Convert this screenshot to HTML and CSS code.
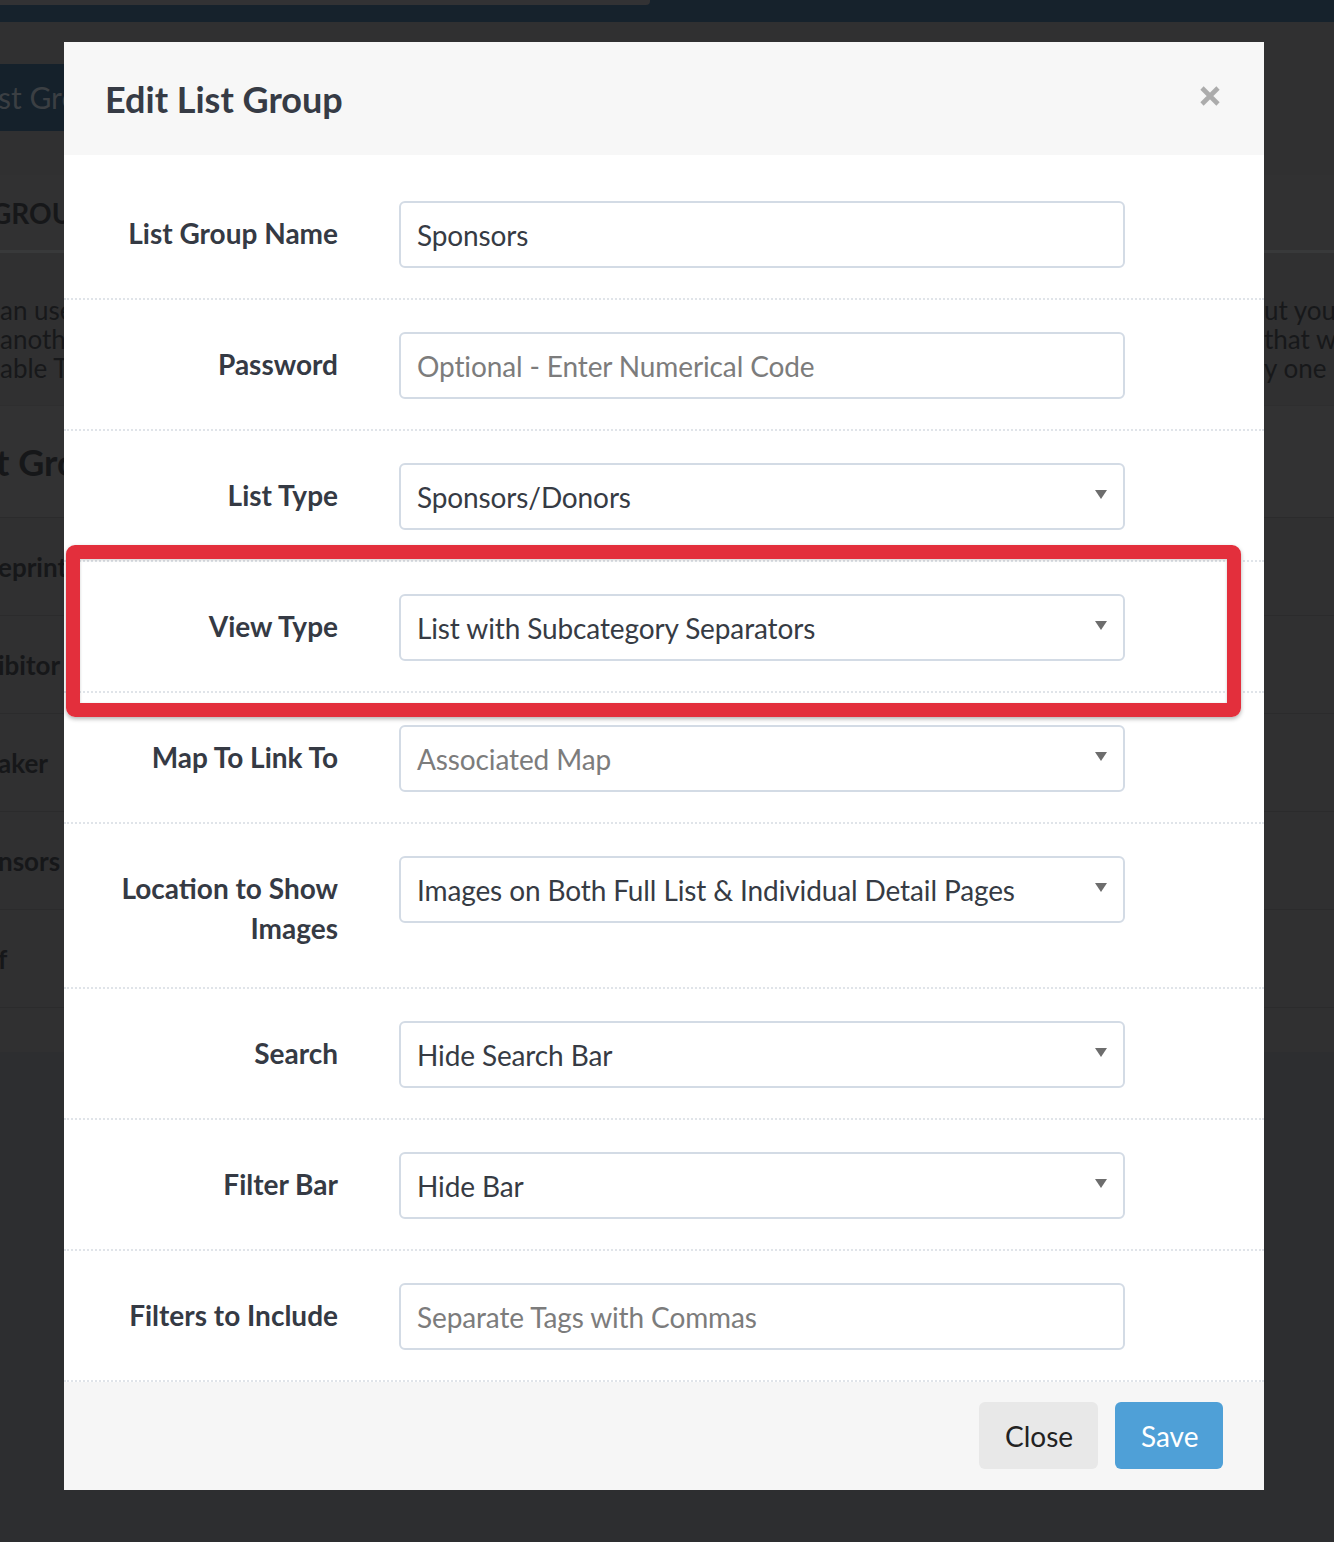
FILE: index.html
```html
<!DOCTYPE html>
<html lang="en">
<head>
<meta charset="utf-8">
<title>Edit List Group</title>
<link rel="stylesheet" href="styles.css">
</head>
<body>
<div class="page">
  <div class="topbar"><div class="topbar-hl"></div></div>
  <div class="content">
    <div class="tab-row"><div class="tab">st Group</div></div>
    <div class="panel-head">GROUPS</div>
    <div class="intro">
      <div class="intro-col"><p>an use</p><p>anoth</p><p>able T</p></div>
      <div class="intro-col intro-right"><p>ut you</p><p>that wi</p><p>y one</p></div>
    </div>
    <div class="section-head">t Groups</div>
    <div class="bg-row">eprint</div>
    <div class="bg-row">ibitor</div>
    <div class="bg-row">aker</div>
    <div class="bg-row">nsors</div>
    <div class="bg-row">f</div>
    <div class="bg-rest"></div>
  </div>
</div>

<div class="modal">
  <div class="modal-header">
    <h2 class="modal-title">Edit List Group</h2>
    <button class="close" type="button" aria-label="Close">
      <svg width="22" height="22" viewBox="0 0 22 22"><path d="M3 3 L19 19 M19 3 L3 19" stroke="#acacac" stroke-width="4.6" stroke-linecap="butt" fill="none"/></svg>
    </button>
  </div>
  <div class="modal-body">
    <div class="form-row">
      <label class="form-label">List Group Name</label>
      <input class="field" type="text" value="Sponsors">
    </div>
    <div class="form-row">
      <label class="form-label">Password</label>
      <input class="field" type="text" placeholder="Optional - Enter Numerical Code">
    </div>
    <div class="form-row">
      <label class="form-label">List Type</label>
      <div class="field select"><span>Sponsors/Donors</span><svg class="caret" width="12" height="9" viewBox="0 0 12 9"><polygon points="0,0 12,0 6,9"/></svg></div>
    </div>
    <div class="form-row">
      <label class="form-label">View Type</label>
      <div class="field select"><span>List with Subcategory Separators</span><svg class="caret" width="12" height="9" viewBox="0 0 12 9"><polygon points="0,0 12,0 6,9"/></svg></div>
    </div>
    <div class="form-row">
      <label class="form-label">Map To Link To</label>
      <div class="field select placeholder"><span>Associated Map</span><svg class="caret" width="12" height="9" viewBox="0 0 12 9"><polygon points="0,0 12,0 6,9"/></svg></div>
    </div>
    <div class="form-row">
      <label class="form-label two-line">Location to Show Images</label>
      <div class="field select"><span>Images on Both Full List &amp; Individual Detail Pages</span><svg class="caret" width="12" height="9" viewBox="0 0 12 9"><polygon points="0,0 12,0 6,9"/></svg></div>
    </div>
    <div class="form-row">
      <label class="form-label">Search</label>
      <div class="field select"><span>Hide Search Bar</span><svg class="caret" width="12" height="9" viewBox="0 0 12 9"><polygon points="0,0 12,0 6,9"/></svg></div>
    </div>
    <div class="form-row">
      <label class="form-label">Filter Bar</label>
      <div class="field select"><span>Hide Bar</span><svg class="caret" width="12" height="9" viewBox="0 0 12 9"><polygon points="0,0 12,0 6,9"/></svg></div>
    </div>
    <div class="form-row">
      <label class="form-label">Filters to Include</label>
      <input class="field" type="text" placeholder="Separate Tags with Commas">
    </div>
  </div>
  <div class="modal-footer">
    <button class="btn btn-default" type="button">Close</button>
    <button class="btn btn-primary" type="button">Save</button>
  </div>
</div>

<div class="highlight"></div>
</body>
</html>
```

FILE: styles.css
```css
html, body {
  margin: 0;
  padding: 0;
}
body {
  font-family: Lato, "Noto Sans", "Liberation Sans", sans-serif;
  background: #2d2e30;
  width: 1334px;
  height: 1542px;
  overflow: hidden;
  position: relative;
}

/* ---------- background page (dimmed) ---------- */
.page {
  width: 1334px;
  height: 1542px;
  background: #2d2e30;
}
.topbar {
  height: 22px;
  background: #16222c;
}
.topbar-hl {
  width: 650px;
  height: 5px;
  background: #323234;
  border-bottom-right-radius: 4px;
}
.content {
  height: 1030px;
  background: #303031;
  overflow: hidden;
  color: #161719;
}
.tab-row {
  padding-top: 42px;
  height: 67px;
}
.tab {
  width: 220px;
  height: 67px;
  line-height: 67px;
  background: #15212b;
  color: #3b3f43;
  font-size: 30px;
  margin-left: -2px;
  white-space: nowrap;
}
.panel-head {
  margin-top: 44px;
  height: 75px;
  line-height: 76px;
  background: #313132;
  border-bottom: 3px solid #38393a;
  font-weight: 700;
  font-size: 28px;
  color: #161719;
  margin-left: -9px;
  white-space: nowrap;
}
.intro {
  height: 109px;
  padding-top: 43px;
  display: flex;
  justify-content: space-between;
  border-bottom: 1px solid #2e2e2f;
}
.intro-col p {
  margin: 0;
  font-size: 26px;
  line-height: 29px;
  color: #17181a;
  white-space: nowrap;
}
.intro-right {
  width: 70px;
  overflow: hidden;
  padding-left: 2px;
}
.section-head {
  height: 111px;
  line-height: 112px;
  background: #323233;
  font-weight: 700;
  font-size: 36px;
  color: #161719;
  margin-left: -4px;
  white-space: nowrap;
}
.bg-row {
  height: 97px;
  line-height: 98px;
  border-top: 1px solid #2b2b2c;
  font-weight: 700;
  font-size: 26px;
  color: #161719;
  white-space: nowrap;
  margin-left: -2px;
}
.bg-rest {
  border-top: 1px solid #2b2b2c;
}

/* ---------- modal ---------- */
.modal {
  position: absolute;
  left: 64px;
  top: 42px;
  width: 1200px;
  background: #ffffff;
}
.modal-header {
  height: 113px;
  box-sizing: border-box;
  padding: 36px 43px 0 41px;
  background: #f7f7f7;
  display: flex;
  justify-content: space-between;
  align-items: flex-start;
}
.modal-title {
  margin: 0;
  font-size: 36px;
  line-height: 43px;
  font-weight: 700;
  color: #363b45;
}
.close {
  margin-top: 7px;
  padding: 0;
  border: 0;
  background: none;
  width: 22px;
  height: 22px;
  display: block;
}
.close svg {
  display: block;
}
.modal-body {
  padding-top: 14px;
}
.form-row {
  display: grid;
  grid-template-columns: 274px 726px;
  column-gap: 61px;
  align-items: start;
  padding: 32px 0 30px;
  border-bottom: 2px dotted #e0e4e9;
}
.form-label {
  text-align: right;
  font-size: 28px;
  font-weight: 700;
  line-height: 40px;
  padding-top: 12px;
  color: #353a44;
}
.form-label.two-line {
  padding-bottom: 9px;
}
.field {
  box-sizing: border-box;
  height: 67px;
  width: 726px;
  border: 2px solid #d3dbe5;
  border-radius: 6px;
  padding: 0 16px;
  font-family: Lato, "Noto Sans", "Liberation Sans", sans-serif;
  font-size: 28px;
  letter-spacing: -0.12px;
  color: #363b44;
  background: #fff;
  outline: none;
  margin: 0;
}
.field::placeholder {
  color: #7c7c7c;
  opacity: 1;
}
.select {
  display: flex;
  align-items: center;
  justify-content: space-between;
  white-space: nowrap;
}
.select.placeholder {
  color: #7c7c7c;
}
.caret {
  fill: #6d6d6d;
  margin-top: -4px;
  flex: none;
}
.modal-footer {
  background: #f6f6f6;
  padding: 20px 41px 21px;
  display: flex;
  justify-content: flex-end;
  gap: 17px;
}
.btn {
  height: 67px;
  border: 0;
  border-radius: 6px;
  padding: 0 26px;
  font-family: Lato, "Noto Sans", "Liberation Sans", sans-serif;
  font-size: 28px;
  cursor: pointer;
}
.btn-default {
  background: #e8e8e8;
  color: #222222;
  width: 119px;
}
.btn-primary {
  background: #4fa0d7;
  color: #ffffff;
  width: 108px;
}

/* ---------- annotation ---------- */
.highlight {
  position: absolute;
  left: 66px;
  top: 545px;
  width: 1175px;
  height: 172px;
  box-sizing: border-box;
  border: 14px solid #e32f3c;
  border-radius: 9px;
  box-shadow: 0 2px 4px rgba(0, 0, 0, 0.3), inset 0 1px 3px rgba(0, 0, 0, 0.2);
}
```
